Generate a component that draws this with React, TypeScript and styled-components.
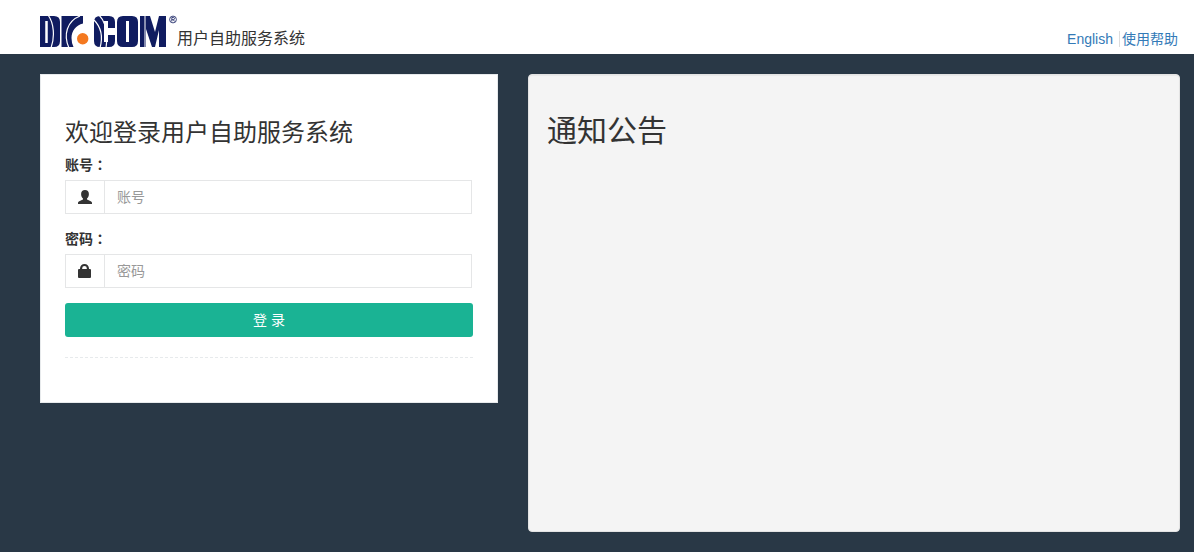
import React from "react";
import styled, { createGlobalStyle } from "styled-components";

const GlobalStyle = createGlobalStyle`
  *, *::before, *::after { box-sizing: border-box; }
  html { background: #293846; }
  body {
    margin: 0;
    background: #293846;
    color: #333;
    font: 14px/20px "Liberation Sans", "Noto Sans CJK SC", sans-serif;
  }
`;

const Header = styled.header`
  display: flex;
  align-items: flex-end;
  justify-content: space-between;
  height: 54px;
  padding: 0 16px 5px 40px;
  background: #fff;
`;

const Brand = styled.div`
  display: flex;
  align-items: flex-end;
`;

const Logo = styled.svg`
  display: block;
  width: 137px;
  height: 34px;
`;

const SystemName = styled.span`
  font-size: 16px;
  line-height: 20px;
`;

const HeaderLinks = styled.nav`
  display: flex;
  align-items: center;
`;

const HeaderLink = styled.a`
  color: #337ab7;
  text-decoration: none;

  & + & {
    margin-left: 6px;
    padding-left: 2px;
    border-left: 1px solid #ddd;
    line-height: 16px;
  }
`;

const Main = styled.main`
  display: grid;
  grid-template-columns: 458fr 652fr;
  align-items: start;
  gap: 30px;
  padding: 20px 14px 20px 40px;
`;

const LoginCard = styled.form`
  padding: 44px 24px;
  background: #fff;
  border: 1px solid #e7eaec;
`;

const LoginTitle = styled.h1`
  margin: 0 0 8px;
  font-size: 24px;
  font-weight: 400;
  line-height: 28px;
`;

const Field = styled.div`
  margin-bottom: 15px;
`;

const Label = styled.label`
  display: block;
  margin-bottom: 5px;
  font-weight: 700;
`;

const Colon = styled.span`
  font-family: "Noto Sans CJK TC", sans-serif;
  line-height: 1;
`;

const InputGroup = styled.div`
  display: flex;
  height: 34px;
  margin-right: 1px;
  border: 1px solid #e5e6e7;
`;

const Addon = styled.span`
  display: flex;
  flex: none;
  align-items: center;
  justify-content: center;
  width: 39px;
  border-right: 1px solid #e5e6e7;
`;

const Input = styled.input`
  flex: 1;
  min-width: 0;
  padding: 0 12px;
  border: 0;
  background: #fff;
  color: inherit;
  font: inherit;

  &::placeholder { color: #999; }
`;

const SubmitButton = styled.button`
  display: block;
  width: 100%;
  height: 34px;
  border: 0;
  border-radius: 3px;
  background: #1ab394;
  color: #fff;
  font: inherit;
  cursor: pointer;
`;

const Divider = styled.hr`
  margin: 20px 0 0;
  border: 0;
  border-top: 1px dashed #e7eaec;
`;

const NoticePanel = styled.section`
  min-height: calc(100vh - 94px);
  padding: 38px 18px;
  border: 1px solid #e3e3e3;
  border-radius: 4px;
  background: #f4f4f4;
  box-shadow: inset 0 1px 1px rgba(0, 0, 0, 0.05);
`;

const NoticeTitle = styled.h2`
  margin: 0;
  font-size: 30px;
  font-weight: 400;
  line-height: 36px;
`;

const DrComLogo = () => (
  <Logo viewBox="0 0 137 34" role="img" aria-label="Dr.COM">
    <g fill="#101c60">
      <path d="M0 1h14q6 0 6 6v19q0 6-6 6H0z" />
      <path d="M21.500 1H43v7.500C36 10 31.500 16 31.500 23q0 5 2 9h-12z" />
      <path d="M54 7q0-6 6-6h9q6 0 6 6v6h-7V6h-4v21h4v-7h7v6q0 6-6 6h-9q-6 0-6-6z" />
      <path fillRule="evenodd" d="M77 7q0-6 6-6h9q6 0 6 6v19q0 6-6 6h-9q-6 0-6-6zM86 6v21h3V6z" />
      <path d="M100 1h10l5 16 4-16h7v31h-7V15l-4 17h-3l-6-18v18h-6z" />
    </g>
    <path d="M6.500 6v22" stroke="#fff" strokeWidth="2.500" />
    <g fill="none" stroke="#fff" strokeWidth="1.200">
      <path d="M8 0c6 8 7 22 3 33" />
      <path d="M40 1C27 6 23 20 29 33" />
      <path d="M54 5c7 7 9 17 6 28" />
      <path d="M59 0c6 6 9 18 7 33" />
      <path d="M105 0v33" strokeWidth="1" />
    </g>
    <circle cx="42.700" cy="23.700" r="5.700" fill="#f47920" />
    <circle cx="133" cy="4.500" r="3.400" fill="none" stroke="#101c60" strokeWidth=".8" />
    <path d="M131.800 6.500v-4h1.500q1.200 0 1.200 1.100t-1.200 1.100h-1.500m1.500 0 1.300 1.800" fill="none" stroke="#101c60" strokeWidth=".8" />
  </Logo>
);

const PersonIcon = () => (
  <svg width="14" height="14" viewBox="0 0 14 14" fill="#333" aria-hidden="true">
    <path d="M7 0c2.400 0 3.900 1.500 3.900 3.900 0 2-.8 3.700-1.900 4.700v1c.6.500 1.600.7 2.700 1.100C13.300 11.200 14 11.800 14 13v1H0v-1c0-1.200.7-1.800 2.300-2.300 1.100-.4 2.100-.6 2.700-1.100v-1C3.900 7.600 3.100 5.900 3.100 3.900 3.100 1.500 4.600 0 7 0z" />
  </svg>
);

const LockIcon = () => (
  <svg width="14" height="14" viewBox="0 0 14 14" fill="#333" aria-hidden="true">
    <path fillRule="evenodd" d="M2 5V4.500C2 2 4 0 6.500 0S11 2 11 4.500V5h1q1 0 1 1v7q0 1-1 1H1q-1 0-1-1V6q0-1 1-1zm2.200 0h4.600V4.300a2.300 2.300 0 0 0-4.600 0z" />
  </svg>
);

export default function App() {
  return (
    <>
      <GlobalStyle />
      <Header>
        <Brand>
          <DrComLogo />
          <SystemName>用户自助服务系统</SystemName>
        </Brand>
        <HeaderLinks>
          <HeaderLink href="#english">English</HeaderLink>
          <HeaderLink href="#help">使用帮助</HeaderLink>
        </HeaderLinks>
      </Header>
      <Main>
        <LoginCard onSubmit={(event: React.FormEvent) => event.preventDefault()}>
          <LoginTitle>欢迎登录用户自助服务系统</LoginTitle>
          <Field>
            <Label htmlFor="account">账号<Colon>：</Colon></Label>
            <InputGroup>
              <Addon><PersonIcon /></Addon>
              <Input id="account" type="text" placeholder="账号" />
            </InputGroup>
          </Field>
          <Field>
            <Label htmlFor="password">密码<Colon>：</Colon></Label>
            <InputGroup>
              <Addon><LockIcon /></Addon>
              <Input id="password" type="password" placeholder="密码" />
            </InputGroup>
          </Field>
          <SubmitButton type="submit">登 录</SubmitButton>
          <Divider />
        </LoginCard>
        <NoticePanel>
          <NoticeTitle>通知公告</NoticeTitle>
        </NoticePanel>
      </Main>
    </>
  );
}
